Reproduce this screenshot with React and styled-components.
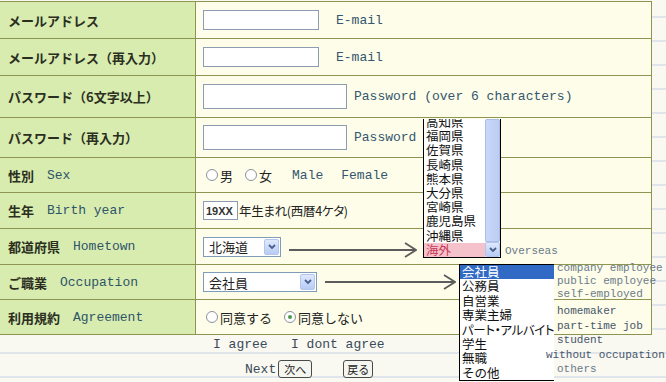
import styled, { createGlobalStyle } from "styled-components";

const GlobalStyle = createGlobalStyle`
  html, body { margin: 0; padding: 0; }
  body {
    width: 666px;
    height: 382px;
    overflow: hidden;
    background-color: #f9f8f1;
    background-image: repeating-linear-gradient(
      to bottom,
      transparent 0px,
      transparent 16px,
      #dfe5ea 16px,
      #dfe5ea 18px,
      transparent 18px,
      transparent 24px
    );
    font-family: "Noto Sans CJK JP", sans-serif;
  }
`;

const LINE = "#8e9552";

const Page = styled.div`
  position: relative;
  width: 666px;
  height: 382px;
  padding-top: 1px;
  box-sizing: border-box;
`;

const Table = styled.div`
  width: 652px;
  border-top: 1px solid ${LINE};
  border-right: 1px solid ${LINE};
  box-sizing: border-box;
`;

const Row = styled.div`
  display: grid;
  grid-template-columns: 196px 1fr;
  height: ${(p) => p.$h}px;
  border-bottom: 1px solid ${LINE};
  box-sizing: border-box;
`;

const Label = styled.div`
  display: flex;
  align-items: center;
  padding-left: 8px;
  background: #d8ecb0;
  border-right: 1px solid ${LINE};
  font-size: 13px;
  font-weight: bold;
  color: #2b2f20;
  white-space: nowrap;
`;

const LabelEn = styled.span`
  margin-left: 13px;
  font-family: "Liberation Mono", monospace;
  font-weight: normal;
  font-size: 13px;
  color: #2e5468;
`;

const Value = styled.div`
  display: flex;
  align-items: center;
  padding-left: 7px;
  background: #fdfde9;
  font-size: 13px;
  color: #222;
  white-space: nowrap;
`;

const TextBox = styled.div`
  width: ${(p) => p.$w}px;
  height: ${(p) => p.$h}px;
  box-sizing: border-box;
  border: 1px solid #8d9cb0;
  background: #fff;
  display: flex;
  align-items: center;
  padding-left: 2px;
  font-family: "Liberation Sans", sans-serif;
  font-size: 11px;
  font-weight: bold;
  color: #333;
`;

const Mono = styled.span`
  margin-left: ${(p) => p.$ml || 0}px;
  font-family: "Liberation Mono", monospace;
  font-size: 13px;
  color: #34566e;
  white-space: pre;
`;

const Plain = styled.span`
  margin-left: ${(p) => p.$ml || 0}px;
  font-size: 12.5px;
  letter-spacing: -0.3px;
  font-feature-settings: "palt";
`;

const RadioLabel = styled.span`
  display: inline-flex;
  align-items: center;
  gap: 2px;
  margin-left: ${(p) => p.$ml || 0}px;
  padding-left: 3px;
`;

const Radio = styled.span`
  width: 12px;
  height: 12px;
  box-sizing: border-box;
  border-radius: 50%;
  border: 1px solid #8b929a;
  background: #fff;
  display: flex;
  align-items: center;
  justify-content: center;
  &::after {
    content: "";
    width: 4px;
    height: 4px;
    border-radius: 50%;
    background: ${(p) => (p.$checked ? "#4c9a48" : "transparent")};
  }
`;

const Select = styled.div`
  width: ${(p) => p.$w}px;
  height: 20px;
  box-sizing: border-box;
  border: 1px solid #7f9db9;
  background: #fff;
  display: flex;
  align-items: center;
`;

const SelectText = styled.span`
  flex: 1;
  padding-left: 5px;
  font-size: 13px;
  color: #222;
`;

const DropButton = styled.span`
  width: 15px;
  height: 16px;
  margin-right: 1px;
  box-sizing: border-box;
  border: 1px solid #b3c6ee;
  border-radius: 2px;
  background: linear-gradient(#dfe9fe, #b7cbf4);
  display: flex;
  align-items: center;
  justify-content: center;
`;

const Chevron = () => (
  <svg width="8" height="6" viewBox="0 0 8 6">
    <path d="M1 1 L4 4 L7 1" fill="none" stroke="#4a5f8a" strokeWidth="1.8" />
  </svg>
);

const Footer = styled.div`
  display: flex;
  align-items: center;
  height: ${(p) => p.$h}px;
  padding-left: ${(p) => p.$pl}px;
  padding-top: ${(p) => p.$pt || 0}px;
  box-sizing: border-box;
`;

const FooterText = styled.span`
  font-family: "Liberation Mono", monospace;
  font-size: 13px;
  color: #3a4a5a;
  white-space: pre;
`;

const SmallButton = styled.span`
  width: ${(p) => p.$w}px;
  height: 18px;
  margin-left: ${(p) => p.$ml}px;
  box-sizing: border-box;
  border: 1px solid #4a4a4a;
  border-radius: 3px;
  background: #f6f6f0;
  display: flex;
  align-items: center;
  justify-content: center;
  font-size: 11px;
  color: #222;
`;

/* overlays pasted on top of the form */

const ListBox = styled.div`
  position: absolute;
  left: ${(p) => p.$x}px;
  top: ${(p) => p.$y}px;
  width: ${(p) => p.$w}px;
  height: ${(p) => p.$h}px;
  box-sizing: border-box;
  display: flex;
  background: #fff;
  border-left: 1px solid #000;
  border-bottom: 1px solid #000;
  border-right: ${(p) => (p.$open ? "none" : "1px solid #000")};
  border-top: ${(p) => (p.$open ? "1px solid #000" : "none")};
  overflow: hidden;
`;

const ListItems = styled.div`
  flex: 1;
  margin-top: ${(p) => p.$shift || 0}px;
`;

const ListItem = styled.div`
  height: ${(p) => p.$lh}px;
  line-height: ${(p) => p.$lh}px;
  padding-left: 2px;
  font-size: 12.5px;
  white-space: nowrap;
  color: ${(p) => (p.$sel === "blue" ? "#fff" : p.$sel === "pink" ? "#c8385a" : "#111")};
  background: ${(p) => (p.$sel === "blue" ? "#316ac5" : p.$sel === "pink" ? "#f5c2cb" : "transparent")};
  font-feature-settings: ${(p) => (p.$palt ? '"palt"' : "normal")};
  letter-spacing: ${(p) => (p.$palt ? "-0.4px" : "0")};
`;

const ScrollBar = styled.div`
  width: 15px;
  display: flex;
  flex-direction: column;
  background: #eef2fb;
`;

const Thumb = styled.div`
  flex: 1;
  box-sizing: border-box;
  border: 1px solid #a9bde6;
  border-radius: 2px;
  background: linear-gradient(to right, #c9d8f8, #bccdf4);
`;

const ScrollDown = styled(DropButton)`
  width: 15px;
  height: 15px;
  margin: 0;
`;

const Note = styled.div`
  position: absolute;
  left: ${(p) => p.$x}px;
  top: ${(p) => p.$y}px;
  font-family: "Liberation Mono", monospace;
  font-size: 11px;
  line-height: ${(p) => p.$lh || 14}px;
  color: ${(p) => p.$c || "#5a6a7a"};
  white-space: pre;
`;

const ArrowSvg = styled.svg`
  position: absolute;
  left: ${(p) => p.$x}px;
  top: ${(p) => p.$y - 8}px;
`;

function Arrow({ x, y, w }) {
  return (
    <ArrowSvg $x={x} $y={y} width={w} height="16" viewBox={`0 0 ${w} 16`}>
      <path
        d={`M0 8 H${w - 1} M${w - 12} 1 L${w - 1} 8 L${w - 12} 15`}
        fill="none"
        stroke="#5c5c5c"
        strokeWidth="1.8"
      />
    </ArrowSvg>
  );
}

const prefectures = ["高知県", "福岡県", "佐賀県", "長崎県", "熊本県", "大分県", "宮崎県", "鹿児島県", "沖縄県", "海外"];
const jobs = ["会社員", "公務員", "自営業", "専業主婦", "パート・アルバイト", "学生", "無職", "その他"];

export default function App() {
  return (
    <Page>
      <GlobalStyle />
      <Table>
        <Row $h={37}>
          <Label>メールアドレス</Label>
          <Value>
            <TextBox $w={116} $h={20} />
            <Mono $ml={17}>E-mail</Mono>
          </Value>
        </Row>
        <Row $h={37}>
          <Label>メールアドレス（再入力）</Label>
          <Value>
            <TextBox $w={116} $h={20} />
            <Mono $ml={17}>E-mail</Mono>
          </Value>
        </Row>
        <Row $h={42}>
          <Label>パスワード（6文字以上）</Label>
          <Value>
            <TextBox $w={144} $h={25} />
            <Mono $ml={7}>Password (over 6 characters)</Mono>
          </Value>
        </Row>
        <Row $h={40}>
          <Label>パスワード（再入力）</Label>
          <Value>
            <TextBox $w={144} $h={25} />
            <Mono $ml={7}>Password</Mono>
          </Value>
        </Row>
        <Row $h={35}>
          <Label>
            性別<LabelEn>Sex</LabelEn>
          </Label>
          <Value>
            <RadioLabel>
              <Radio />男
            </RadioLabel>
            <RadioLabel $ml={9}>
              <Radio />女
            </RadioLabel>
            <Mono $ml={20}>Male</Mono>
            <Mono $ml={18}>Female</Mono>
          </Value>
        </Row>
        <Row $h={36}>
          <Label>
            生年<LabelEn>Birth year</LabelEn>
          </Label>
          <Value>
            <TextBox $w={35} $h={19}>19XX</TextBox>
            <Plain $ml={1}>年生まれ(西暦4ケタ)</Plain>
          </Value>
        </Row>
        <Row $h={36}>
          <Label>
            都道府県<LabelEn>Hometown</LabelEn>
          </Label>
          <Value>
            <Select $w={78}>
              <SelectText>北海道</SelectText>
              <DropButton>
                <Chevron />
              </DropButton>
            </Select>
          </Value>
        </Row>
        <Row $h={35}>
          <Label>
            ご職業<LabelEn>Occupation</LabelEn>
          </Label>
          <Value>
            <Select $w={114}>
              <SelectText>会社員</SelectText>
              <DropButton>
                <Chevron />
              </DropButton>
            </Select>
          </Value>
        </Row>
        <Row $h={35}>
          <Label>
            利用規約<LabelEn>Agreement</LabelEn>
          </Label>
          <Value>
            <RadioLabel>
              <Radio />同意する
            </RadioLabel>
            <RadioLabel $ml={9}>
              <Radio $checked />同意しない
            </RadioLabel>
          </Value>
        </Row>
      </Table>

      <Footer $h={19} $pl={213}>
        <FooterText>I agree   I dont agree</FooterText>
      </Footer>
      <Footer $h={28} $pl={245} $pt={2}>
        <FooterText>Next</FooterText>
        <SmallButton $w={34} $ml={2}>次へ</SmallButton>
        <SmallButton $w={30} $ml={31}>戻る</SmallButton>
      </Footer>

      <Arrow x={289} y={250} w={128} />
      <Arrow x={325} y={282} w={131} />

      <ListBox $x={423} $y={119} $w={78} $h={139}>
        <ListItems $shift={-4}>
          {prefectures.map((p) => (
            <ListItem key={p} $lh={14.2} $sel={p === "海外" ? "pink" : null}>
              {p}
            </ListItem>
          ))}
        </ListItems>
        <ScrollBar>
          <Thumb />
          <ScrollDown>
            <Chevron />
          </ScrollDown>
        </ScrollBar>
      </ListBox>
      <Note $x={505} $y={244} $c="#6a7a88">Overseas</Note>

      <ListBox $x={459} $y={264} $w={95} $h={117} $open>
        <ListItems>
          {jobs.map((j, i) => (
            <ListItem key={j} $lh={14.4} $sel={i === 0 ? "blue" : null} $palt={j.length > 5}>
              {j}
            </ListItem>
          ))}
        </ListItems>
      </ListBox>
      <Note $x={557} $y={262} $lh={13} $c="#6b7b8b">
        {"company employee\npublic employee\nself-employed"}
      </Note>
      <Note $x={557} $y={304} $lh={14.5} $c="#46566a">
        {"homemaker\npart-time job\nstudent"}
      </Note>
      <Note $x={546} $y={347.5} $lh={14.5} $c="#46566a">
        {"without occupation"}
      </Note>
      <Note $x={557} $y={362} $lh={14.5} $c="#6b7b8b">
        {"others"}
      </Note>
    </Page>
  );
}
